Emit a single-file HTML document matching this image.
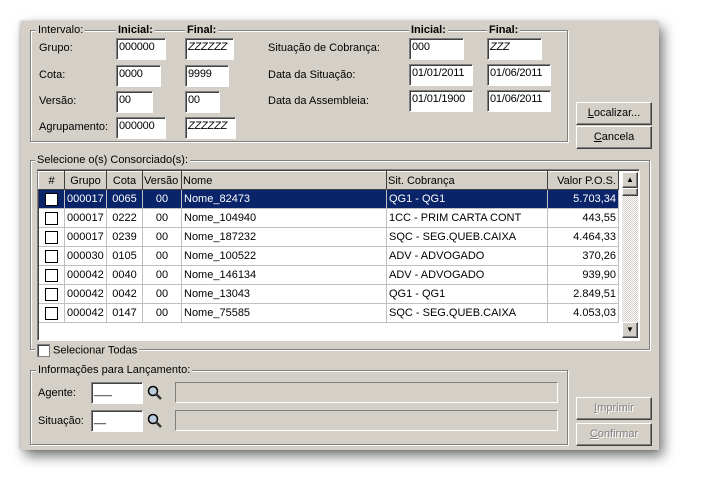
<!DOCTYPE html><html><head><meta charset="utf-8"><style>
body{margin:0;width:701px;height:492px;background:#fff;position:relative;overflow:hidden;font-family:"Liberation Sans",Arial,sans-serif;font-size:11px;color:#000}
.a{position:absolute}
#win{left:21px;top:21px;width:638px;height:429px;background:#d4d0c8;box-shadow:4px 6px 12px rgba(0,0,0,.55),-1px 0 3px rgba(0,0,0,.2)}
.gb{position:absolute;border:1px solid #808080;box-shadow:1px 1px 0 #fff inset,1px 1px 0 #fff}
.gl{position:absolute;background:#d4d0c8;padding:0 2px;white-space:nowrap}
.in{position:absolute;background:#fff;border:1px solid;border-color:#808080 #fff #fff #808080;box-shadow:inset 1px 1px 0 #404040;box-sizing:border-box;padding:2px 0 0 2px;white-space:nowrap;overflow:hidden;letter-spacing:-0.2px}
.lb{position:absolute;white-space:nowrap}
.bt{position:absolute;background:#d4d0c8;border:1px solid;border-color:#fff #404040 #404040 #fff;box-shadow:inset -1px -1px 0 #808080;box-sizing:border-box;text-align:center;line-height:20px}
.dis{color:#808080;text-shadow:1px 1px 0 #fff}
table{border-collapse:collapse;position:absolute;left:0px;top:1px;table-layout:fixed;width:580px}
td,th{height:18px;padding:0 2px;white-space:nowrap;overflow:hidden;font-weight:normal;border-right:1px solid #c0c0c0;border-bottom:1px solid #c0c0c0}
th{background:#d4d0c8;border:1px solid;border-color:#fff #404040 #404040 #fff;text-align:left;height:17px}
.cb{display:inline-block;width:11px;height:11px;border:1px solid #000;background:#fff;vertical-align:middle}
tr.sel td{background:#0a246a;color:#fff}
.r{text-align:right}.c{text-align:center}
</style></head><body>
<div id="win" class="a"></div>

<div class="gb" style="left:30px;top:30px;width:536px;height:110px"></div>
<div class="gl" style="left:36px;top:24px">Intervalo:</div>
<div class="gl" style="left:116px;top:24px;font-weight:bold">Inicial:</div>
<div class="gl" style="left:185px;top:24px;font-weight:bold">Final:</div>
<div class="gl" style="left:409px;top:24px;font-weight:bold">Inicial:</div>
<div class="gl" style="left:487px;top:24px;font-weight:bold">Final:</div>

<div class="lb" style="left:39px;top:42px">Grupo:</div>
<div class="lb" style="left:39px;top:69px">Cota:</div>
<div class="lb" style="left:39px;top:95px">Versão:</div>
<div class="lb" style="left:39px;top:121px">Agrupamento:</div>
<div class="in" style="left:116px;top:38px;width:50px;height:22px">000000</div>
<div class="in" style="left:185px;top:38px;width:49px;height:22px;font-style:italic">ZZZZZZ</div>
<div class="in" style="left:116px;top:65px;width:45px;height:22px">0000</div>
<div class="in" style="left:185px;top:65px;width:44px;height:22px">9999</div>
<div class="in" style="left:116px;top:91px;width:37px;height:22px">00</div>
<div class="in" style="left:185px;top:91px;width:35px;height:22px">00</div>
<div class="in" style="left:116px;top:117px;width:50px;height:22px">000000</div>
<div class="in" style="left:185px;top:117px;width:51px;height:22px;font-style:italic">ZZZZZZ</div>

<div class="lb" style="left:268px;top:42px">Situação de Cobrança:</div>
<div class="lb" style="left:268px;top:69px">Data da Situação:</div>
<div class="lb" style="left:268px;top:95px">Data da Assembleia:</div>
<div class="in" style="left:409px;top:38px;width:55px;height:22px">000</div>
<div class="in" style="left:487px;top:38px;width:55px;height:22px;font-style:italic">ZZZ</div>
<div class="in" style="left:409px;top:64px;width:64px;height:22px">01/01/2011</div>
<div class="in" style="left:487px;top:64px;width:64px;height:22px">01/06/2011</div>
<div class="in" style="left:409px;top:90px;width:64px;height:22px">01/01/1900</div>
<div class="in" style="left:487px;top:90px;width:64px;height:22px">01/06/2011</div>

<div class="bt" style="left:576px;top:102px;width:76px;height:23px"><u>L</u>ocalizar...</div>
<div class="bt" style="left:576px;top:126px;width:76px;height:23px"><u>C</u>ancela</div>

<div class="gb" style="left:30px;top:160px;width:618px;height:188px"></div>
<div class="gl" style="left:35px;top:154px">Selecione o(s) Consorciado(s):</div>

<div class="a" style="left:37px;top:169px;width:603px;height:172px;background:#fff;border:1px solid;border-color:#808080 #fff #fff #808080;box-shadow:inset 1px 1px 0 #404040;box-sizing:border-box">
<table>
<colgroup><col style="width:26px"><col style="width:42px"><col style="width:36px"><col style="width:39px"><col style="width:205px"><col style="width:161px"><col style="width:71px"></colgroup>
<tr><th class="c">#</th><th class="c">Grupo</th><th class="c">Cota</th><th style="padding:0 1px">Versão</th><th style="padding:0 1px">Nome</th><th style="padding:0 1px">Sit. Cobrança</th><th class="r">Valor P.O.S.</th></tr>
<tr class="sel"><td class="c"><span class="cb"></span></td><td>000017</td><td class="c">0065</td><td class="c">00</td><td>Nome_82473</td><td>QG1 - QG1</td><td class="r">5.703,34</td></tr>
<tr><td class="c"><span class="cb"></span></td><td>000017</td><td class="c">0222</td><td class="c">00</td><td>Nome_104940</td><td>1CC - PRIM CARTA CONT</td><td class="r">443,55</td></tr>
<tr><td class="c"><span class="cb"></span></td><td>000017</td><td class="c">0239</td><td class="c">00</td><td>Nome_187232</td><td>SQC - SEG.QUEB.CAIXA</td><td class="r">4.464,33</td></tr>
<tr><td class="c"><span class="cb"></span></td><td>000030</td><td class="c">0105</td><td class="c">00</td><td>Nome_100522</td><td>ADV - ADVOGADO</td><td class="r">370,26</td></tr>
<tr><td class="c"><span class="cb"></span></td><td>000042</td><td class="c">0040</td><td class="c">00</td><td>Nome_146134</td><td>ADV - ADVOGADO</td><td class="r">939,90</td></tr>
<tr><td class="c"><span class="cb"></span></td><td>000042</td><td class="c">0042</td><td class="c">00</td><td>Nome_13043</td><td>QG1 - QG1</td><td class="r">2.849,51</td></tr>
<tr><td class="c"><span class="cb"></span></td><td>000042</td><td class="c">0147</td><td class="c">00</td><td>Nome_75585</td><td>SQC - SEG.QUEB.CAIXA</td><td class="r">4.053,03</td></tr>
</table>
<div class="a" style="left:584px;top:2px;width:16px;height:166px;background:repeating-conic-gradient(#fff 0 25%,#d4d0c8 0 50%) 0 0/2px 2px"></div>
<div class="bt" style="left:584px;top:2px;width:16px;height:16px;line-height:14px;font-size:8px">▲</div>
<div class="bt" style="left:584px;top:18px;width:16px;height:8px"></div>
<div class="bt" style="left:584px;top:152px;width:16px;height:16px;line-height:14px;font-size:8px">▼</div>
</div>
<div class="gl" style="left:35px;top:344px"><span class="cb" style="border-color:#808080;box-shadow:inset 1px 1px 0 #404040"></span> Selecionar Todas</div>

<div class="gb" style="left:30px;top:370px;width:536px;height:73px"></div>
<div class="gl" style="left:36px;top:364px">Informações para Lançamento:</div>
<div class="lb" style="left:38px;top:387px">Agente:</div>
<div class="lb" style="left:38px;top:415px">Situação:</div>
<div class="in" style="left:91px;top:382px;width:52px;height:22px">___</div>
<div class="in" style="left:91px;top:410px;width:52px;height:22px">__</div>
<svg class="a" style="left:147px;top:385px" width="16" height="16"><circle cx="6" cy="6" r="4.5" fill="#bcd" stroke="#000" stroke-width="1.5"/><path d="M9 9l5 5" stroke="#333" stroke-width="2.5"/></svg>
<svg class="a" style="left:147px;top:413px" width="16" height="16"><circle cx="6" cy="6" r="4.5" fill="#bcd" stroke="#000" stroke-width="1.5"/><path d="M9 9l5 5" stroke="#333" stroke-width="2.5"/></svg>
<div class="a" style="left:175px;top:382px;width:383px;height:21px;border:1px solid;border-color:#808080 #fff #fff #808080;box-sizing:border-box"></div>
<div class="a" style="left:175px;top:410px;width:383px;height:21px;border:1px solid;border-color:#808080 #fff #fff #808080;box-sizing:border-box"></div>

<div class="bt dis" style="left:576px;top:397px;width:76px;height:23px"><u>I</u>mprimir</div>
<div class="bt dis" style="left:576px;top:423px;width:76px;height:23px"><u>C</u>onfirmar</div>
</body></html>
